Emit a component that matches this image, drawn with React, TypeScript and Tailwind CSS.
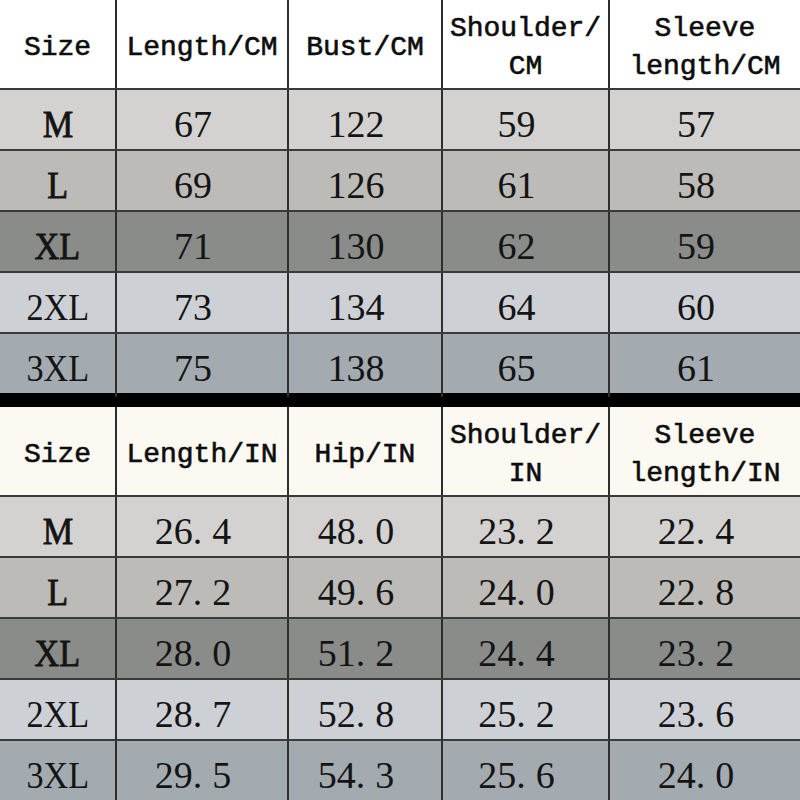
import React from 'react';

const rowColors = ['bg-[#d3d2d0]', 'bg-[#bcbbb7]', 'bg-[#898c88]', 'bg-[#cdd0d4]', 'bg-[#a4abb0]'];
const sizes = ['M', 'L', 'XL', '2XL', '3XL'];

const cmRows = [
  ['67', '122', '59', '57'],
  ['69', '126', '61', '58'],
  ['71', '130', '62', '59'],
  ['73', '134', '64', '60'],
  ['75', '138', '65', '61'],
];

const inRows = [
  ['26.4', '48.0', '23.2', '22.4'],
  ['27.2', '49.6', '24.0', '22.8'],
  ['28.0', '51.2', '24.4', '23.2'],
  ['28.7', '52.8', '25.2', '23.6'],
  ['29.5', '54.3', '25.6', '24.0'],
];

const cols = 'grid grid-cols-[115px_172px_154px_167px_192px]';
const mono = "font-['Liberation_Mono',monospace]";
const serif = "font-['Liberation_Serif',serif]";

function Num({ value }: { value: string }) {
  const [a, b] = value.split('.');
  if (b === undefined) return <>{a}</>;
  return (
    <>
      {a}
      <span className="mr-[10px]">.</span>
      {b}
    </>
  );
}

function Cell({ children, first, className = '' }: { children: React.ReactNode; first?: boolean; className?: string }) {
  return (
    <div className={`flex items-center justify-center text-center ${first ? '' : 'border-l-2 border-[#2e2e2e]'} ${className}`}>
      {children}
    </div>
  );
}

function SizeTable({ unit, second, rows, headBg }: { unit: string; second: string; rows: string[][]; headBg: string }) {
  const head = ['Size', `Length/${unit}`, `${second}/${unit}`];
  return (
    <div className="flex flex-col">
      <div className={`${cols} h-[88px] ${headBg} ${mono} text-[28px] leading-[38px] text-[#0d0d0d] [-webkit-text-stroke:0.6px_#0d0d0d]`}>
        {head.map((h, i) => (
          <Cell key={h} first={i === 0} className="pt-[8px]">{h}</Cell>
        ))}
        <Cell className="pt-[8px]">
          <span>Shoulder/<br />{unit}</span>
        </Cell>
        <Cell className="pt-[8px]">
          <span>Sleeve<br />length/{unit}</span>
        </Cell>
      </div>
      {rows.map((r, i) => (
        <div key={sizes[i]} className={`${cols} h-[61px] border-t-2 border-[#3a3a3a] ${rowColors[i]} ${serif} text-[38px] text-[#141414]`}>
          <Cell first className="pt-[6px]">
            <span className={`inline-block scale-x-90 ${i < 3 ? '[-webkit-text-stroke:0.8px_#141414]' : ''}`}>{sizes[i]}</span>
          </Cell>
          {r.map((v, j) => (
            <Cell key={j} className="pt-[6px] pr-[18px]">
              <span><Num value={v} /></span>
            </Cell>
          ))}
        </div>
      ))}
    </div>
  );
}

export default function App() {
  return (
    <div className="w-[800px] h-[800px] overflow-hidden bg-white">
      <SizeTable unit="CM" second="Bust" rows={cmRows} headBg="bg-white" />
      <div className="h-[14px] bg-black" />
      <SizeTable unit="IN" second="Hip" rows={inRows} headBg="bg-[#fcf9f2]" />
    </div>
  );
}
